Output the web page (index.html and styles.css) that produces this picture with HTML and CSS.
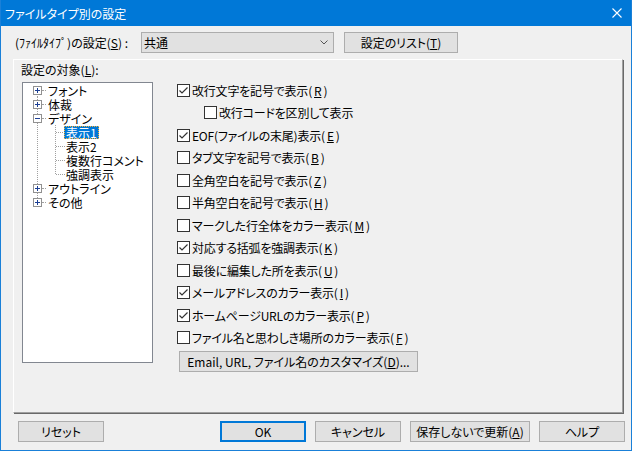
FILE: index.html
```html
<!DOCTYPE html>
<html lang="ja">
  <head>
    <meta charset="UTF-8" />
    <title>ファイルタイプ別の設定</title>
    <link rel="stylesheet" href="styles.css">
  </head>
  <body>
    <div class="window">
      <div class="titlebar">
        <span class="title">ファイルタイプ別の設定</span>
        <svg class="close" width="10" height="10" viewBox="0 0 10 10">
          <path d="M0.5 0.5 L9.5 9.5 M9.5 0.5 L0.5 9.5" stroke="#fff" stroke-width="1.1" fill="none" />
        </svg>
      </div>

      <div class="content">
        <div class="top-row">
          <span class="type-label">(ﾌｧｲﾙﾀｲﾌﾟ)の設定(<u>S</u>) :</span>
          <div class="combo">
            <span>共通</span>
            <svg width="8" height="5" viewBox="0 0 8 5">
              <path d="M0.5 0.5 L4 4 L7.5 0.5" stroke="#555" stroke-width="1" fill="none" />
            </svg>
          </div>
          <div class="btn list-btn">設定のリスト(<u>T</u>)</div>
        </div>

        <div class="panel">
          <div class="target">
            <div class="target-label">設定の対象(<u>L</u>):</div>
            <div class="tree">
              <div class="node">
                <span class="rail first"><svg class="exp" width="9" height="9" viewBox="0 0 9 9"><rect x="0.5" y="0.5" width="8" height="8" fill="#fff" stroke="#919191" /><path d="M2 4.5 H7 M4.5 2 V7" stroke="#1c3f94" /></svg></span>
                <span class="dash"></span><span class="name">フォント</span>
              </div>
              <div class="node">
                <span class="rail"><svg class="exp" width="9" height="9" viewBox="0 0 9 9"><rect x="0.5" y="0.5" width="8" height="8" fill="#fff" stroke="#919191" /><path d="M2 4.5 H7 M4.5 2 V7" stroke="#1c3f94" /></svg></span>
                <span class="dash"></span><span class="name">体裁</span>
              </div>
              <div class="node">
                <span class="rail"><svg class="exp" width="9" height="9" viewBox="0 0 9 9"><rect x="0.5" y="0.5" width="8" height="8" fill="#fff" stroke="#919191" /><path d="M2 4.5 H7" stroke="#1c3f94" /></svg></span>
                <span class="dash"></span><span class="name">デザイン</span>
              </div>
              <div class="node">
                <span class="rail"></span><span class="sub-rail"></span>
                <span class="dash sub"></span><span class="name selected">表示1</span>
              </div>
              <div class="node">
                <span class="rail"></span><span class="sub-rail"></span>
                <span class="dash sub"></span><span class="name">表示2</span>
              </div>
              <div class="node">
                <span class="rail"></span><span class="sub-rail"></span>
                <span class="dash sub"></span><span class="name">複数行コメント</span>
              </div>
              <div class="node">
                <span class="rail"></span><span class="sub-rail last"></span>
                <span class="dash sub"></span><span class="name">強調表示</span>
              </div>
              <div class="node">
                <span class="rail"><svg class="exp" width="9" height="9" viewBox="0 0 9 9"><rect x="0.5" y="0.5" width="8" height="8" fill="#fff" stroke="#919191" /><path d="M2 4.5 H7 M4.5 2 V7" stroke="#1c3f94" /></svg></span>
                <span class="dash"></span><span class="name">アウトライン</span>
              </div>
              <div class="node">
                <span class="rail last"><svg class="exp" width="9" height="9" viewBox="0 0 9 9"><rect x="0.5" y="0.5" width="8" height="8" fill="#fff" stroke="#919191" /><path d="M2 4.5 H7 M4.5 2 V7" stroke="#1c3f94" /></svg></span>
                <span class="dash"></span><span class="name">その他</span>
              </div>
            </div>
          </div>

          <div class="options">
            <div class="opt"><span class="box checked"></span>改行文字を記号で表示(<u>R</u>)</div>
            <div class="opt indent"><span class="box"></span>改行コードを区別して表示</div>
            <div class="opt"><span class="box checked"></span>EOF(ファイルの末尾)表示(<u>E</u>)</div>
            <div class="opt"><span class="box"></span>タブ文字を記号で表示(<u>B</u>)</div>
            <div class="opt"><span class="box"></span>全角空白を記号で表示(<u>Z</u>)</div>
            <div class="opt"><span class="box"></span>半角空白を記号で表示(<u>H</u>)</div>
            <div class="opt"><span class="box"></span>マークした行全体をカラー表示(<u>M</u>)</div>
            <div class="opt"><span class="box checked"></span>対応する括弧を強調表示(<u>K</u>)</div>
            <div class="opt"><span class="box"></span>最後に編集した所を表示(<u>U</u>)</div>
            <div class="opt"><span class="box checked"></span>メールアドレスのカラー表示(<u>I</u>)</div>
            <div class="opt"><span class="box checked"></span>ホームページURLのカラー表示(<u>P</u>)</div>
            <div class="opt"><span class="box"></span>ファイル名と思わしき場所のカラー表示(<u>F</u>)</div>
            <div class="btn custom-btn">Email, URL, ファイル名のカスタマイズ(<u>D</u>)...</div>
          </div>
        </div>

        <div class="footer">
          <div class="btn">リセット</div>
          <div class="btn default ok">OK</div>
          <div class="btn">キャンセル</div>
          <div class="btn wide">保存しないで更新(<u>A</u>)</div>
          <div class="btn">ヘルプ</div>
        </div>
      </div>
    </div>
  </body>
</html>
```

FILE: styles.css
```css
body {
  margin: 0;
  padding: 0;
  font-family: "Noto Sans CJK JP", "Noto Sans", sans-serif;
  font-size: 12px;
  font-weight: 400;
  font-feature-settings: "palt";
  color: #000;
}

.window {
  width: 632px;
  height: 451px;
  box-sizing: border-box;
  border: 1px solid #1a80d8;
  border-top: none;
  background-color: #f0f0f0;
  overflow: hidden;
}

.titlebar {
  height: 26px;
  background-color: #0078d7;
  color: #fff;
  display: flex;
  align-items: center;
  justify-content: space-between;
  padding: 0 9px 0 4px;
  box-sizing: border-box;
}

.content {
  padding: 6px 6px 0 12px;
}

/* top row */
.top-row {
  display: flex;
  align-items: center;
  height: 21px;
}

.type-label {
  width: 128px;
  padding-left: 2px;
  box-sizing: border-box;
}

.combo {
  width: 193px;
  height: 21px;
  box-sizing: border-box;
  border: 1px solid #adadad;
  background-color: #e1e1e1;
  display: flex;
  align-items: center;
  justify-content: space-between;
  padding: 0 5px 0 2px;
  margin-right: 10px;
}

.btn {
  height: 21px;
  width: 86px;
  box-sizing: border-box;
  border: 1px solid #adadad;
  background-color: #e1e1e1;
  display: flex;
  align-items: center;
  justify-content: center;
  white-space: nowrap;
  flex: none;
}

.list-btn {
  width: 114px;
}

/* panel */
.panel {
  margin-top: 6px;
  width: 610px;
  height: 354px;
  box-sizing: border-box;
  border-top: 1px solid #fff;
  border-left: 1px solid #fff;
  border-right: 1px solid #a0a0a0;
  border-bottom: 1px solid #a0a0a0;
  box-shadow: 1px 1px 0 #696969;
  display: flex;
}

.target {
  padding: 2px 0 0 8px;
}

.target-label {
  height: 16px;
  line-height: 16px;
  margin-left: -1px;
}

.tree {
  margin-top: 4px;
  width: 131px;
  height: 281px;
  box-sizing: border-box;
  border: 1px solid #828790;
  background-color: #fff;
}

.node {
  display: flex;
  align-items: center;
  height: 14px;
}

.rail,
.sub-rail {
  height: 14px;
  display: flex;
  align-items: center;
  background-image: repeating-linear-gradient(to bottom, #a0a0a0 0 1px, transparent 1px 2px);
  background-repeat: no-repeat;
  background-size: 1px 100%;
}

.rail {
  width: 9px;
  margin-left: 10px;
  background-position: 4px 0;
}

.rail.first {
  background-size: 1px 50%;
  background-position: 4px 100%;
}

.rail.last {
  background-size: 1px 50%;
  background-position: 4px 0;
}

.sub-rail {
  width: 14px;
  background-position: 13px 0;
}

.sub-rail.last {
  background-size: 1px 50%;
}

.exp {
  display: block;
}

.dash {
  width: 5px;
  height: 1px;
  background-image: repeating-linear-gradient(to right, #a0a0a0 0 1px, transparent 1px 2px);
  background-position: 1px 0;
}

.dash.sub {
  width: 9px;
  background-position: 0 0;
}

.name {
  display: block;
  height: 13px;
  line-height: 13px;
  padding: 0 1px;
  white-space: nowrap;
}

.name.selected {
  background-color: #0078d7;
  color: #fff;
  outline: 1px dotted #f7b33c;
  outline-offset: -1px;
  margin-left: -1px;
  padding: 0 2px 0 2px;
}

/* options */
.options {
  margin-left: 24px;
  padding-top: 19px;
  display: flex;
  flex-direction: column;
}

.opt {
  height: 22.5px;
  display: flex;
  align-items: center;
  gap: 2px;
  white-space: nowrap;
  letter-spacing: -0.2px;
}

.opt.indent {
  margin-left: 27px;
}

.box {
  width: 13px;
  height: 13px;
  box-sizing: border-box;
  border: 1px solid #333;
  background-color: #fff;
  flex: none;
}

.box.checked {
  background-image: url("data:image/svg+xml,%3Csvg xmlns='http://www.w3.org/2000/svg' width='11' height='11'%3E%3Cpath d='M1.5 5.5 L4 8 L9.5 2.5' stroke='%23333' stroke-width='1.2' fill='none'/%3E%3C/svg%3E");
}

.custom-btn {
  width: 239px;
  margin: 2px 0 0 2px;
}

/* footer */
.footer {
  margin-top: 8px;
  display: flex;
  gap: 9px;
  padding-left: 5px;
}

.btn.ok {
  margin-left: auto;
}

.btn.default {
  border: 2px solid #0078d7;
}

.btn.wide {
  width: 120px;
}
```
